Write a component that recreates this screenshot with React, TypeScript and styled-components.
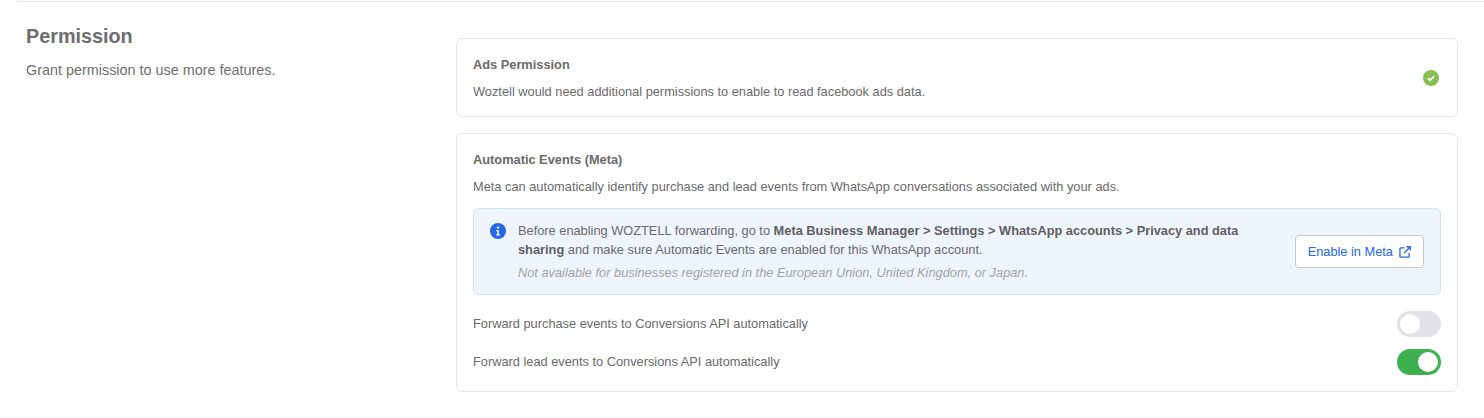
import { createGlobalStyle } from 'styled-components';
import styled from 'styled-components';

const GlobalStyle = createGlobalStyle`
  html, body {
    margin: 0;
    padding: 0;
    background: #fff;
    font-family: "Liberation Sans", Arial, sans-serif;
    color: #6a6a6a;
  }
`;

const Page = styled.div`
  width: 1484px;
  height: 418px;
  box-sizing: border-box;
  padding-left: 18px;
  overflow: hidden;
`;

const Section = styled.section`
  display: flex;
  border-top: 1px solid #e6e6e6;
  margin-top: 1px;
  padding: 23px 26px 0 8px;
`;

const Intro = styled.div`
  width: 430px;
  flex-shrink: 0;
`;

const Heading = styled.h2`
  margin: 0;
  font-size: 19.8px;
  line-height: 23px;
  font-weight: 700;
  color: #6e6e6e;
`;

const IntroText = styled.p`
  margin: 14px 0 0;
  font-size: 14.4px;
  line-height: 16px;
  color: #6e6e6e;
`;

const Cards = styled.div`
  flex: 1;
  display: flex;
  flex-direction: column;
  gap: 16px;
  padding-top: 13px;
`;

const Card = styled.div<{ $compact?: boolean }>`
  border: 1px solid #e6e6e6;
  border-radius: 6px;
  padding: 17px 16px ${(p) => (p.$compact ? '15px' : '16px')};
`;

const AdsRow = styled.div`
  display: flex;
  align-items: center;
  justify-content: space-between;
`;

const CardTitle = styled.div`
  font-size: 12.8px;
  line-height: 18px;
  font-weight: 700;
  color: #6a6a6a;
`;

const CardText = styled.div`
  margin-top: 9px;
  font-size: 12.8px;
  line-height: 18px;
  color: #6a6a6a;
`;

const Notice = styled.div`
  display: flex;
  align-items: center;
  justify-content: space-between;
  margin-top: 12px;
  height: 87px;
  box-sizing: border-box;
  padding: 0 16px;
  background: #eef5fe;
  border: 1px solid #cfe2fb;
  border-radius: 6px;
`;

const NoticeBody = styled.div`
  display: flex;
  gap: 12px;
  width: 770px;
  padding-bottom: 2px;
`;

const InfoIcon = styled.svg`
  width: 16px;
  height: 16px;
  flex-shrink: 0;
  margin-top: 2px;
`;

const NoticeText = styled.div`
  font-size: 12.8px;
  line-height: 19px;
  color: #6a6a6a;

  strong {
    font-weight: 700;
    color: #5f5f5f;
  }
`;

const NoticeHint = styled.div`
  margin-top: 6px;
  font-size: 12.8px;
  line-height: 16px;
  font-style: italic;
  color: #a3a3a3;
`;

const MetaButton = styled.a`
  display: flex;
  align-items: center;
  gap: 6px;
  height: 33px;
  box-sizing: border-box;
  padding: 0 12px;
  background: #fff;
  border: 1px solid #c8c8cc;
  border-radius: 4px;
  font-size: 12.8px;
  color: #2468e8;
  white-space: nowrap;
`;

const ToggleRow = styled.div<{ $first?: boolean }>`
  display: flex;
  align-items: center;
  justify-content: space-between;
  height: 26px;
  margin-top: ${(p) => (p.$first ? '16px' : '12px')};
`;

const ToggleLabel = styled.span`
  padding-bottom: 2px;
  font-size: 12.8px;
  color: #6a6a6a;
`;

const Toggle = styled.div<{ $on?: boolean }>`
  display: flex;
  justify-content: ${(p) => (p.$on ? 'flex-end' : 'flex-start')};
  width: 44px;
  height: 26px;
  box-sizing: border-box;
  padding: 3px;
  border-radius: 13px;
  background: ${(p) => (p.$on ? '#3fb04f' : '#e2e2e6')};
`;

const Knob = styled.div`
  width: 20px;
  height: 20px;
  border-radius: 50%;
  background: #fff;
`;

const StatusIcon = styled.svg`
  margin-right: 2px;
  margin-top: -2px;
`;

export default function App() {
  return (
    <Page>
      <GlobalStyle />
      <Section>
        <Intro>
          <Heading>Permission</Heading>
          <IntroText>Grant permission to use more features.</IntroText>
        </Intro>
        <Cards>
          <Card $compact>
            <AdsRow>
              <div>
                <CardTitle>Ads Permission</CardTitle>
                <CardText>Woztell would need additional permissions to enable to read facebook ads data.</CardText>
              </div>
              <StatusIcon width="16" height="16" viewBox="0 0 16 16">
                <circle cx="8" cy="8" r="8" fill="#84c150" />
                <path d="M4.8 8.2l2.2 2.1 4.2-4.2" fill="none" stroke="#fff" strokeWidth="1.8" />
              </StatusIcon>
            </AdsRow>
          </Card>
          <Card>
            <CardTitle>Automatic Events (Meta)</CardTitle>
            <CardText>Meta can automatically identify purchase and lead events from WhatsApp conversations associated with your ads.</CardText>
            <Notice>
              <NoticeBody>
                <InfoIcon viewBox="0 0 16 16">
                  <circle cx="8" cy="8" r="8" fill="#2468e8" />
                  <circle cx="8" cy="4.6" r="1.2" fill="#fff" />
                  <path d="M6.4 7h2.4v4.2h1v1.2H6.3v-1.2h1V8.2h-.9z" fill="#fff" />
                </InfoIcon>
                <NoticeText>
                  Before enabling WOZTELL forwarding, go to <strong>Meta Business Manager &gt; Settings &gt; WhatsApp accounts &gt; Privacy and data sharing</strong> and make sure Automatic Events are enabled for this WhatsApp account.
                  <NoticeHint>Not available for businesses registered in the European Union, United Kingdom, or Japan.</NoticeHint>
                </NoticeText>
              </NoticeBody>
              <MetaButton>
                Enable in Meta
                <svg width="12" height="12" viewBox="0 0 13 13" fill="none" stroke="#2468e8" strokeWidth="1.4">
                  <path d="M6 2H2a1 1 0 0 0-1 1v8a1 1 0 0 0 1 1h8a1 1 0 0 0 1-1V7.5" />
                  <path d="M5.5 7.5L12 1M8 .8h4.2V5" />
                </svg>
              </MetaButton>
            </Notice>
            <ToggleRow $first>
              <ToggleLabel>Forward purchase events to Conversions API automatically</ToggleLabel>
              <Toggle><Knob /></Toggle>
            </ToggleRow>
            <ToggleRow>
              <ToggleLabel>Forward lead events to Conversions API automatically</ToggleLabel>
              <Toggle $on><Knob /></Toggle>
            </ToggleRow>
          </Card>
        </Cards>
      </Section>
    </Page>
  );
}
